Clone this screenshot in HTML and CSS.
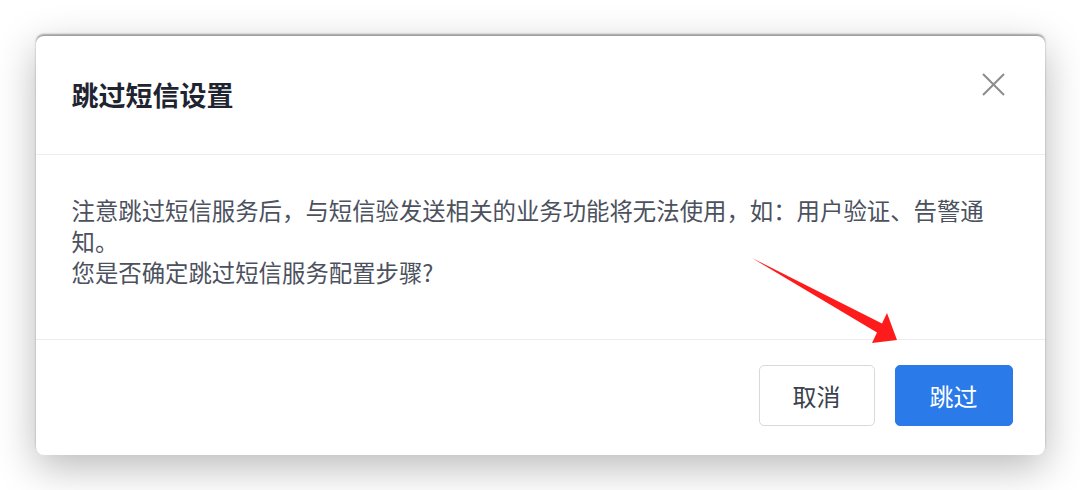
FILE: index.html
```html
<!DOCTYPE html>
<html lang="zh-CN">
<head>
  <meta charset="UTF-8">
  <meta name="viewport" content="width=device-width, initial-scale=1.0">
  <title>跳过短信设置</title>
  <link rel="stylesheet" href="styles.css">
</head>
<body>
  <div class="dialog">
    <!-- Header -->
    <div class="dialog-header">
      <h1>跳过短信设置</h1>
      <button class="close-btn" aria-label="关闭">
        <svg width="23" height="23" viewBox="0 0 23 23">
          <path d="M1 1 L22 22 M22 1 L1 22" stroke="#8c8c8c" stroke-width="2" fill="none"/>
        </svg>
      </button>
    </div>

    <!-- Body -->
    <div class="dialog-body">
      <p>注意跳过短信服务后，与短信验发送相关的业务功能将无法使用，如：用户验证、告警通知。</p>
      <p>您是否确定跳过短信服务配置步骤?</p>
    </div>

    <!-- Footer -->
    <div class="dialog-footer">
      <button class="btn btn-cancel">取消</button>
      <button class="btn btn-primary">跳过</button>
    </div>
  </div>

  <!-- annotation arrow -->
  <svg class="annotation" width="1080" height="490" viewBox="0 0 1080 490">
    <polygon points="752,258 882,323.5 887,313 897,340 872,343 877,332.5" fill="#fd1b1b"/>
  </svg>
</body>
</html>
```

FILE: styles.css
```css
body {
  font-family: "Noto Sans CJK SC", "Noto Sans", sans-serif;
  background-color: #fff;
  margin: 0;
  padding: 0;
  height: 100vh;
  display: flex;
  justify-content: center;
  align-items: center;
  overflow: hidden;
}
.dialog {
  width: 1009px;
  background-color: #fff;
  border-radius: 8px;
  box-shadow: 0 -2px 2px rgba(0, 0, 0, 0.35), 0 12px 40px rgba(0, 0, 0, 0.28);
}
.dialog-header {
  height: 118px;
  padding: 0 40px 0 36px;
  display: flex;
  align-items: center;
  justify-content: space-between;
  border-bottom: 1px solid #ebedf0;
}
h1 {
  margin: 0;
  font-size: 27px;
  font-weight: 700;
  color: #1f2431;
}
.close-btn {
  background: none;
  border: none;
  padding: 0;
  margin-top: -20px;
  width: 23px;
  height: 23px;
  cursor: pointer;
}
.close-btn svg {
  display: block;
}
.dialog-body {
  padding: 40px 48px 51px 36px;
  font-size: 23.4px;
  line-height: 31px;
  color: #4c515e;
}
.dialog-body p {
  margin: 0;
}
.dialog-footer {
  padding: 25px 32px 29px;
  display: flex;
  justify-content: flex-end;
  gap: 20px;
  border-top: 1px solid #ebedf0;
}
.btn {
  font-family: inherit;
  font-size: 24px;
  height: 61px;
  border-radius: 5px;
  cursor: pointer;
}
.btn-cancel {
  width: 116px;
  background-color: #fff;
  color: #3c414e;
  border: 1px solid #d6d9de;
}
.btn-primary {
  width: 118px;
  background-color: #2a7ae9;
  color: #fff;
  border: 1px solid #2a7ae9;
}
.annotation {
  position: absolute;
  top: 0;
  left: 0;
  pointer-events: none;
}
```
